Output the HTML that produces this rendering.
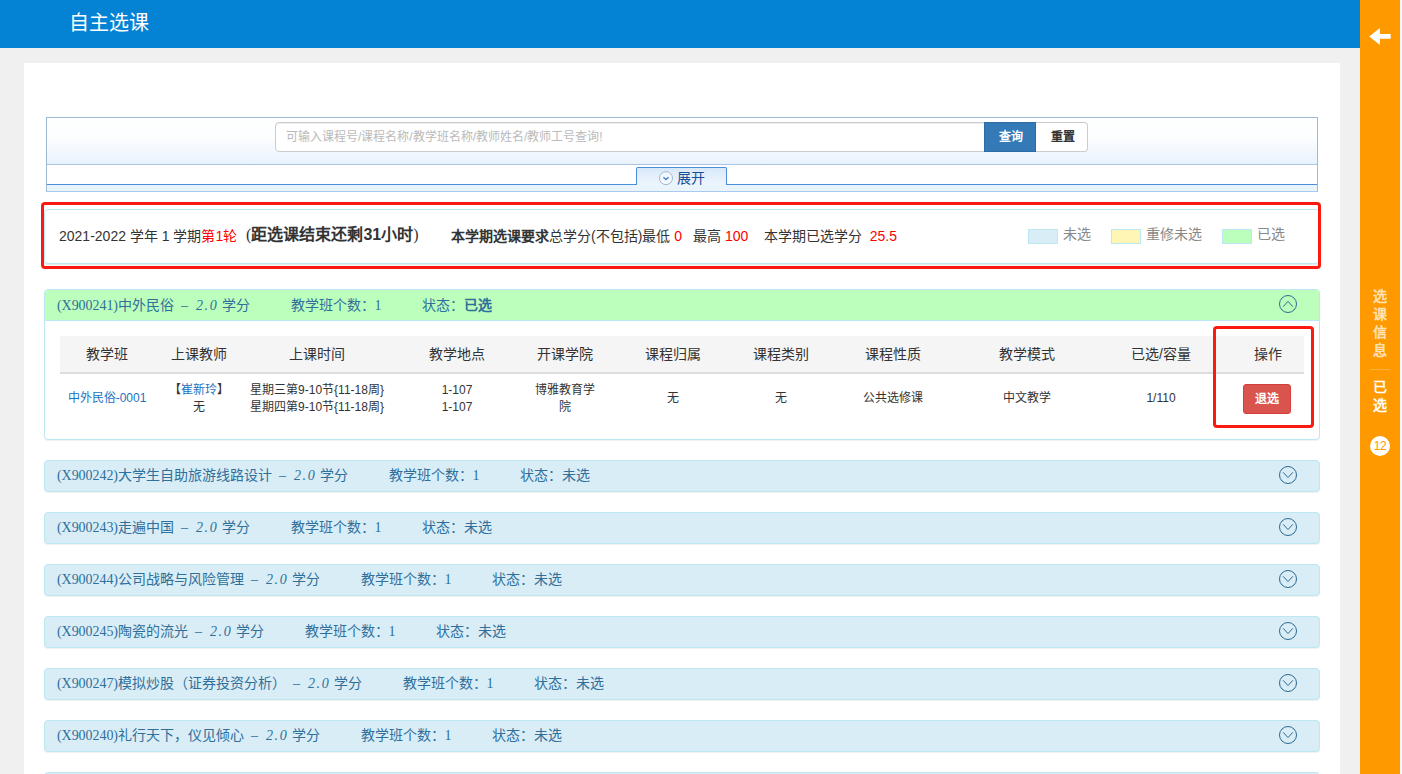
<!DOCTYPE html>
<html lang="zh-CN">
<head>
<meta charset="utf-8">
<title>自主选课</title>
<style>
*{box-sizing:border-box;margin:0;padding:0}
html,body{width:1402px;height:774px;overflow:hidden}
body{position:relative;background:#f0f0f0;font-family:"Liberation Sans",sans-serif;font-size:14px;color:#333}
.abs{position:absolute}
#edge{left:1400px;top:0;width:2px;height:774px;background:#f5f7fa}
#topbar{left:0;top:0;width:1360px;height:48px;background:#0483d4}
#topbar .title{position:absolute;left:69px;top:0;height:47px;line-height:47px;font-size:20px;color:#fff;white-space:nowrap}
#side{left:1360px;top:0;width:40px;height:774px;background:#ff9900}
#side .vt{position:absolute;left:0;width:40px;text-align:center;font-weight:bold;font-size:14px;line-height:18px;color:#fff}
#side .vt span{display:block}
#side .sep{position:absolute;left:10px;top:369px;width:20px;height:1px;background:#ffb040}
#side .num{position:absolute;left:10px;top:436px;width:20px;height:20px;border-radius:50%;background:#fff;color:#ff9900;font-size:12px;line-height:20px;text-align:center;letter-spacing:-0.3px}
#main{left:24px;top:63px;width:1316px;height:711px;background:#fff}

/* search */
#search{left:46px;top:117px;width:1272px;height:75px;border:1px solid #9fb9d6;border-bottom-color:#a9c9ee;background:#fff}
#search .r1{position:absolute;left:0;top:0;width:1270px;height:47px;background:linear-gradient(#ffffff 0%,#fbfdff 45%,#e9f2fd 100%);border-bottom:1px solid #a9c4e3}
#search .r3{position:absolute;left:0;top:66px;width:1270px;height:7px;background:#eaf4fb;border-top:1px solid #4a8edb}
#inp{left:275px;top:122px;width:710px;height:30px;border:1px solid #ccc;border-radius:4px 0 0 4px;background:#fff;box-shadow:inset 0 1px 1px rgba(0,0,0,.075);font-size:12px;line-height:28px;padding-left:10px;color:#bababa;white-space:nowrap}
#bq{left:984px;top:122px;width:52px;height:30px;background:#337ab7;border:1px solid #2e6da4;color:#fff;font-size:12px;font-weight:bold;line-height:29px;text-align:center;padding-left:2px}
#br{left:1036px;top:122px;width:52px;height:30px;background:#fff;border:1px solid #ccc;border-left:0;border-radius:0 4px 4px 0;color:#333;font-size:12px;font-weight:bold;line-height:29px;text-align:center;padding-left:2px}
#tab{left:636px;top:167px;width:91px;height:18px;border:1px solid #4a8edb;border-bottom:0;border-radius:2px 2px 0 0;background:linear-gradient(#d9e9fa,#eef6fd);font-size:14px;line-height:20px;color:#164f96;white-space:nowrap}

/* info */
#info{left:44px;top:209px;width:1276px;height:55px;border:1px solid #bce8f1;border-radius:4px;background:#fff;box-shadow:0 1px 2px rgba(0,0,0,.12)}
.red{border:3px solid #fb1a10;border-radius:4px}
#red1{left:41px;top:202px;width:1280px;height:67px}
#red2{left:1213px;top:326px;width:101px;height:102px}
.t{position:absolute;white-space:nowrap}
.rd{color:#f00}
.sw{position:absolute;top:229px;width:30px;height:15px;border:1px solid #bce8f1}
.lg{position:absolute;top:225px;font-size:14px;line-height:18px;color:#888;white-space:nowrap}

/* panels */
.pn{left:44px;width:1276px;height:32px;border:1px solid #bce8f1;border-radius:4px;background:#d9edf7;box-shadow:0 1px 1px rgba(0,0,0,.06)}
.pt{position:absolute;left:12px;top:0;height:30px;line-height:30px;font-family:"Liberation Serif",serif;font-size:14px;color:#2f6f9a;white-space:pre}
.pt i{font-style:italic;display:inline-block;width:23px;text-align:center;letter-spacing:1.6px;padding-left:1px}
.pt .a{display:inline-block;width:61px;letter-spacing:-.05px}
.pt .d{display:inline-block;width:21px;text-align:center}
.pt .s{display:inline-block;width:4px}
.pt .s1{display:inline-block;width:7px;text-align:center}
.pt .g1{margin-left:40.5px}
.pt .g2{margin-left:40px}
.ic{position:absolute;left:1233px;top:4px;width:20px;height:20px}
#gp{left:44px;top:289px;width:1276px;height:151px;border:1px solid #bce8f1;border-radius:4px;background:#fff;box-shadow:0 1px 1px rgba(0,0,0,.06)}
#gp .hd{position:absolute;left:0;top:0;width:1274px;height:31px;background:#bcffbc;border-bottom:1px solid #bce8f1;border-radius:3px 3px 0 0}

/* table */
#th{left:60px;top:336px;width:1244px;height:38px;background:#f5f5f5;border-bottom:2px solid #ddd}
.h{position:absolute;top:336px;height:35px;line-height:36px;font-size:14px;color:#333;text-align:center;white-space:nowrap}
.c{position:absolute;font-size:12px;line-height:17px;color:#333;text-align:center;white-space:nowrap}
.lk{color:#1b72c2}
#bt{left:1243px;top:384px;width:48px;height:30px;background:#d9534f;border:1px solid #d43f3a;border-radius:3px;color:#fff;font-size:12px;font-weight:bold;line-height:29px;text-align:center;padding-right:1px}
</style>
</head>
<body>
<div id="topbar" class="abs"><div class="title">自主选课</div></div>
<div id="main" class="abs"></div>

<div id="side" class="abs">
  <svg class="abs" style="left:9px;top:27px" width="23" height="18" viewBox="0 0 23 18"><path d="M0.2 9.4 L10.9 1 L10.9 7 L21.7 7 L21.7 11.8 L10.9 11.8 L10.9 17.9 Z" fill="#fff"/></svg>
  <div class="vt" style="top:287px;color:#ffe3b8"><span>选</span><span>课</span><span>信</span><span>息</span></div>
  <div class="sep"></div>
  <div class="vt" style="top:378px"><span>已</span><span>选</span></div>
  <div class="num">12</div>
</div>
<div id="edge" class="abs"></div>

<div id="search" class="abs"><div class="r1"></div><div class="r3"></div></div>
<div id="inp" class="abs">可输入课程号/课程名称/教学班名称/教师姓名/教师工号查询!</div>
<div id="bq" class="abs">查询</div>
<div id="br" class="abs">重置</div>
<div id="tab" class="abs">
  <svg class="abs" style="left:21px;top:2px" width="16" height="16" viewBox="0 0 16 16"><circle cx="8" cy="8.2" r="6.5" fill="#f3f8fe" stroke="#a3b6cf" stroke-width="1"/><path d="M5.4 7.2 L8 9.6 L10.6 7.2" fill="none" stroke="#4d86c4" stroke-width="1.5"/></svg>
  <span class="abs" style="left:40px;top:0px">展开</span>
</div>

<div id="info" class="abs"></div>
<div class="t" style="left:59px;top:227px;line-height:18px;font-size:14px">2021-2022 学年 1 学期<span class="rd">第1轮</span></div>
<div class="t" style="left:246px;top:224px;line-height:22px;font-family:'Liberation Serif',serif;font-size:16px"><span style="display:inline-block;width:5.4px">(</span><b>距选课结束还剩<span style="font-family:'Liberation Sans',sans-serif">31</span>小时</b>)</div>
<div class="t" style="left:451px;top:227px;line-height:18px;font-size:14px"><b>本学期选课要求</b>总学分(不包括)最低 <span class="rd">0</span></div>
<div class="t" style="left:693px;top:227px;line-height:18px;font-size:14px">最高 <span class="rd">100</span></div>
<div class="t" style="left:764px;top:227px;line-height:18px;font-size:14px">本学期已选学分&nbsp; <span class="rd">25.5</span></div>
<div class="sw" style="left:1028px;background:#d9edf7"></div><div class="lg" style="left:1063px">未选</div>
<div class="sw" style="left:1111px;background:#fff5b5"></div><div class="lg" style="left:1146px">重修未选</div>
<div class="sw" style="left:1222px;background:#bcffbc"></div><div class="lg" style="left:1257px">已选</div>
<div id="red1" class="abs red"></div>

<div id="gp" class="abs"><div class="hd"></div>
  <div class="pt"><span class="a">(X900241)</span>中外民俗<span class="d">–</span><i>2.0</i><span class="s"></span>学分<span class="g1">教学班个数：<span class="s1">1</span></span><span class="g2">状态：<b style="font-family:'Liberation Sans',sans-serif">已选</b></span></div>
  <svg class="ic" viewBox="0 0 20 20"><circle cx="10" cy="10" r="8.5" fill="none" stroke="#2d6a91" stroke-width="1"/><path d="M5.1 12.7 L10 7.4 L14.9 12.7" fill="none" stroke="#2d6a91" stroke-width="1"/></svg>
</div>
<div id="th" class="abs"></div>
<div class="h" style="left:60px;width:94px">教学班</div>
<div class="h" style="left:154px;width:90px">上课教师</div>
<div class="h" style="left:244px;width:146px">上课时间</div>
<div class="h" style="left:390px;width:134px">教学地点</div>
<div class="h" style="left:524px;width:82px">开课学院</div>
<div class="h" style="left:606px;width:134px">课程归属</div>
<div class="h" style="left:740px;width:82px">课程类别</div>
<div class="h" style="left:822px;width:142px">课程性质</div>
<div class="h" style="left:964px;width:126px">教学模式</div>
<div class="h" style="left:1090px;width:142px">已选/容量</div>
<div class="h" style="left:1232px;width:72px">操作</div>

<div class="c lk" style="left:60px;width:94px;top:390px">中外民俗-0001</div>
<div class="c" style="left:154px;width:90px;top:382px">【<span class="lk">崔新玲</span>】<br>无</div>
<div class="c" style="left:244px;width:146px;top:382px">星期三第9-10节{11-18周}<br>星期四第9-10节{11-18周}</div>
<div class="c" style="left:390px;width:134px;top:382px">1-107<br>1-107</div>
<div class="c" style="left:524px;width:82px;top:382px">博雅教育学<br>院</div>
<div class="c" style="left:606px;width:134px;top:390px">无</div>
<div class="c" style="left:740px;width:82px;top:390px">无</div>
<div class="c" style="left:822px;width:142px;top:390px">公共选修课</div>
<div class="c" style="left:964px;width:126px;top:390px">中文教学</div>
<div class="c" style="left:1090px;width:142px;top:390px">1/110</div>
<div id="bt" class="abs">退选</div>
<div id="red2" class="abs red"></div>

<div class="abs pn" style="top:460px"><div class="pt"><span class="a">(X900242)</span>大学生自助旅游线路设计<span class="d">–</span><i>2.0</i><span class="s"></span>学分<span class="g1">教学班个数：<span class="s1">1</span></span><span class="g2">状态：未选</span></div><svg class="ic" viewBox="0 0 20 20"><circle cx="10" cy="10" r="8.5" fill="none" stroke="#2d6a91" stroke-width="1"/><path d="M5.1 7.3 L10 12.6 L14.9 7.3" fill="none" stroke="#2d6a91" stroke-width="1"/></svg></div>
<div class="abs pn" style="top:512px"><div class="pt"><span class="a">(X900243)</span>走遍中国<span class="d">–</span><i>2.0</i><span class="s"></span>学分<span class="g1">教学班个数：<span class="s1">1</span></span><span class="g2">状态：未选</span></div><svg class="ic" viewBox="0 0 20 20"><circle cx="10" cy="10" r="8.5" fill="none" stroke="#2d6a91" stroke-width="1"/><path d="M5.1 7.3 L10 12.6 L14.9 7.3" fill="none" stroke="#2d6a91" stroke-width="1"/></svg></div>
<div class="abs pn" style="top:564px"><div class="pt"><span class="a">(X900244)</span>公司战略与风险管理<span class="d">–</span><i>2.0</i><span class="s"></span>学分<span class="g1">教学班个数：<span class="s1">1</span></span><span class="g2">状态：未选</span></div><svg class="ic" viewBox="0 0 20 20"><circle cx="10" cy="10" r="8.5" fill="none" stroke="#2d6a91" stroke-width="1"/><path d="M5.1 7.3 L10 12.6 L14.9 7.3" fill="none" stroke="#2d6a91" stroke-width="1"/></svg></div>
<div class="abs pn" style="top:616px"><div class="pt"><span class="a">(X900245)</span>陶瓷的流光<span class="d">–</span><i>2.0</i><span class="s"></span>学分<span class="g1">教学班个数：<span class="s1">1</span></span><span class="g2">状态：未选</span></div><svg class="ic" viewBox="0 0 20 20"><circle cx="10" cy="10" r="8.5" fill="none" stroke="#2d6a91" stroke-width="1"/><path d="M5.1 7.3 L10 12.6 L14.9 7.3" fill="none" stroke="#2d6a91" stroke-width="1"/></svg></div>
<div class="abs pn" style="top:668px"><div class="pt"><span class="a">(X900247)</span>模拟炒股（证券投资分析）<span class="d">–</span><i>2.0</i><span class="s"></span>学分<span class="g1">教学班个数：<span class="s1">1</span></span><span class="g2">状态：未选</span></div><svg class="ic" viewBox="0 0 20 20"><circle cx="10" cy="10" r="8.5" fill="none" stroke="#2d6a91" stroke-width="1"/><path d="M5.1 7.3 L10 12.6 L14.9 7.3" fill="none" stroke="#2d6a91" stroke-width="1"/></svg></div>
<div class="abs pn" style="top:720px"><div class="pt"><span class="a">(X900240)</span>礼行天下，仪见倾心<span class="d">–</span><i>2.0</i><span class="s"></span>学分<span class="g1">教学班个数：<span class="s1">1</span></span><span class="g2">状态：未选</span></div><svg class="ic" viewBox="0 0 20 20"><circle cx="10" cy="10" r="8.5" fill="none" stroke="#2d6a91" stroke-width="1"/><path d="M5.1 7.3 L10 12.6 L14.9 7.3" fill="none" stroke="#2d6a91" stroke-width="1"/></svg></div>
<div class="abs pn" style="top:772px"></div>
</body>
</html>
